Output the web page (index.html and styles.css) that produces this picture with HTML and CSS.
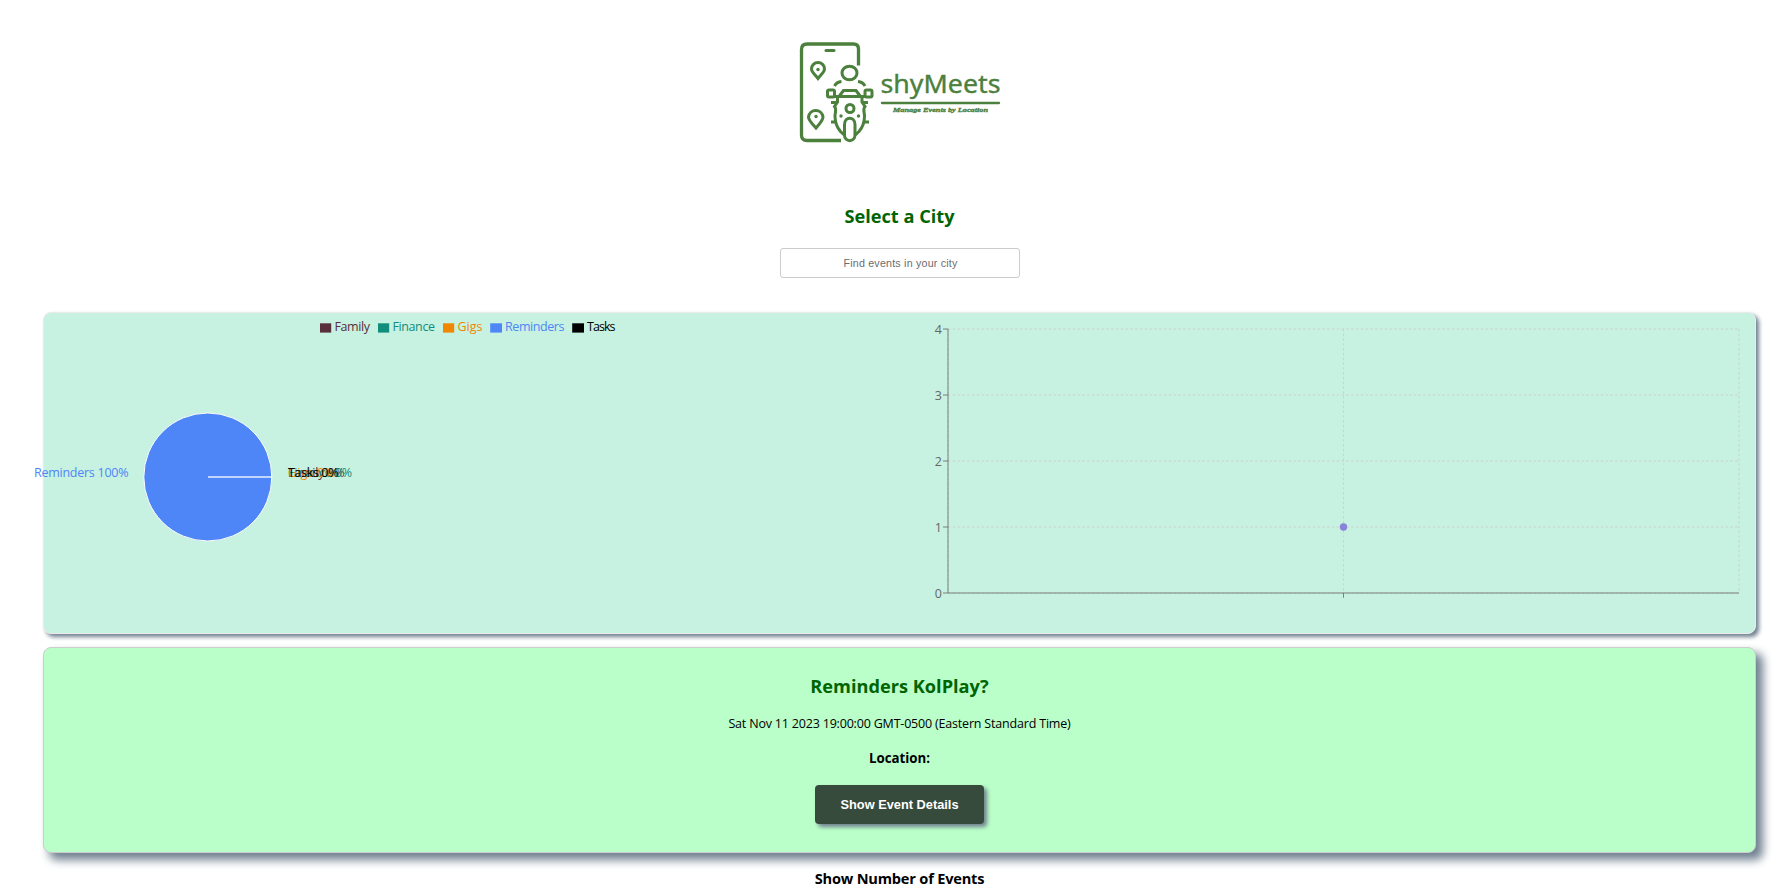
FILE: index.html
```html
<!DOCTYPE html>
<html lang="en">
<head>
<meta charset="utf-8">
<title>shyMeets</title>
<link rel="stylesheet" href="styles.css">
</head>
<body>
<main class="app">
  <svg class="logo" viewBox="780 30 240 125" width="240" height="125" fill="none" stroke="#4b803d" stroke-width="3" role="img" aria-label="shyMeets">
    <path d="M858.500 65.500V49q0-5-5-5h-46.500q-5.500 0-5.500 5.500v85.500q0 5.500 5.500 5.500h34" stroke-width="3.300"/>
    <path d="M826 50.500h8" stroke-linecap="round"/>
    <path d="M818 78.500c-4-5-6.500-6.500-6.500-9.500a6.500 6.500 0 0 1 13 0c0 3-2.500 4.500-6.500 9.500z"/>
    <path d="M816 128c-4.500-5.500-7.500-7.500-7.500-11a7.300 7.300 0 0 1 14.500 0c0 3.500-2.500 5.500-7 11z"/>
    <g fill="#4b803d" stroke="none"><circle cx="818" cy="69.500" r="1.700"/><circle cx="816" cy="116.500" r="1.700"/><circle cx="841" cy="116" r="1.700"/><circle cx="858.500" cy="116" r="1.700"/></g>
    <ellipse cx="849.500" cy="73" rx="7.500" ry="6.800"/>
    <path d="M834.500 86q2-4 7-4.500M858 81.500q5 .5 7 4.500"/>
    <rect x="827.500" y="90" width="7" height="7" rx="1.500"/>
    <rect x="865" y="90" width="7" height="7" rx="1.500"/>
    <path d="M834.500 96.500h30.500M839 96.500l4.500-6h12.500l4.500 6"/>
    <path d="M837.500 97v5l-3 4.500c2.500 2.500.5 6 .5 9.500 0 7 2.500 12 5.500 15.500 1.500 1.500 2.500 2.500 4.500 4M862 97v5l3 4.500c-2.500 2.500-.5 6-.5 9.500 0 7-2.500 12-5.500 15.500-1.500 1.500-2.500 2.500-4.500 4"/>
    <path d="M831 102.500h6M863 102.500h5M831 122h5M864 122h5"/>
    <circle cx="850" cy="108.500" r="4"/>
    <path d="M844.500 124.500c0-8.500 10.500-8.500 10.500 0v10.500c0 7.500-10.500 7.500-10.500 0z"/>
    <path d="M882 103h117" stroke-width="2.300" stroke-linecap="round"/>
    <g fill="#4b803d">
      <text class="logo-name" x="880.500" y="92.700" textLength="120" lengthAdjust="spacingAndGlyphs">shyMeets</text>
      <text class="logo-tag" x="893" y="111.500" textLength="95" lengthAdjust="spacingAndGlyphs">Manage Events by Location</text>
    </g>
  </svg>

  <h2 class="title">Select a City</h2>
  <input class="city" type="text" placeholder="Find events in your city">

  <section class="charts">
    <svg class="pie" viewBox="44 313 856 320" width="856" height="320">
      <rect x="320" y="323.300" width="11.200" height="9.300" fill="#5a2f3c"/>
      <rect x="378" y="323.300" width="11.200" height="9.300" fill="#118d7c"/>
      <rect x="443" y="323.300" width="11.200" height="9.300" fill="#f18700"/>
      <rect x="490.200" y="323.300" width="11.800" height="9.300" fill="#4e86f7"/>
      <rect x="572.200" y="323.300" width="11.800" height="9.300" fill="#000"/>
      <text x="334.500" y="331" fill="#5a2f3c" textLength="35.500">Family</text>
      <text x="392.500" y="331" fill="#118d7c" textLength="42.500">Finance</text>
      <text x="457.500" y="331" fill="#f18700" textLength="25">Gigs</text>
      <text x="505" y="331" fill="#4e86f7" textLength="59.500">Reminders</text>
      <text x="587" y="331" fill="#000" textLength="28.500">Tasks</text>
      <circle cx="207.800" cy="477" r="64" fill="#4e86f7" stroke="#fff" stroke-width="1"/>
      <path d="M208 477h64" stroke="#fff" stroke-width="2" opacity=".65"/>
      <text x="34" y="477" fill="#4e86f7" textLength="94.500">Reminders 100%</text>
      <text x="288" y="477" fill="#5a2f3c" textLength="56.500">Family 0%</text>
      <text x="288" y="477" fill="#118d7c" textLength="64">Finance 0%</text>
      <text x="288" y="477" fill="#f18700" textLength="46.500">Gigs 0%</text>
      <text x="288" y="477" fill="#000" textLength="50.500">Tasks 0%</text>
    </svg>
    <svg class="scatter" viewBox="900 313 855 320" width="855" height="320">
      <g stroke="#ccc" stroke-width=".8" stroke-dasharray="2.4 2.4">
        <path d="M948 329h791M948 395h791M948 461h791M948 527h791M948 593h791"/>
        <path d="M948 329v264M1343.500 329v264M1739 329v264"/>
      </g>
      <path d="M948 329v264h791M943 593h5M943 527h5M943 461h5M943 395h5M943 329h5M1343.500 593v4.800" fill="none" stroke="#666" stroke-width=".8"/>
      <g fill="#666" text-anchor="end">
        <text x="942" y="333.500">4</text><text x="942" y="399.500">3</text><text x="942" y="465.500">2</text><text x="942" y="531.500">1</text><text x="942" y="597.500">0</text>
      </g>
      <circle cx="1343.500" cy="527" r="3.700" fill="#8884d8"/>
    </svg>
  </section>

  <section class="event">
    <h2 class="event-name">Reminders KolPlay?</h2>
    <p class="date">Sat Nov 11 2023 19:00:00 GMT-0500 (Eastern Standard Time)</p>
    <p class="location">Location:</p>
    <button class="details" type="button">Show Event Details</button>
  </section>

  <h3 class="count">Show Number of Events</h3>
</main>
</body>
</html>
```
FILE: styles.css
```css
* { box-sizing: border-box; }

html, body { height: 100%; }

body {
  margin: 0;
  overflow: hidden;
  background: #fff;
  color: #000;
  font-family: "Segoe UI", "Open Sans", "Noto Sans", sans-serif;
}

.app {
  display: flex;
  flex-direction: column;
  align-items: center;
  padding: 30px 27px 0 43px;
}

.logo { display: block; flex: none; }
.logo-name { font: 400 25.5px "Noto Sans", sans-serif; stroke-width: .35px; }
.logo-tag { font: italic 700 6.8px "Liberation Serif", serif; stroke-width: .35px; }

.title {
  margin: 48px 0 0;
  color: #006400;
  font-size: 18.200px;
  font-weight: 700;
  line-height: 26px;
}

.city {
  width: 240px;
  height: 30px;
  margin: 19px 0 34px;
  padding: 0 0 0 2px;
  border: 1px solid #ccc;
  border-radius: 3px;
  font: 10.7px "Liberation Sans", Arial, sans-serif;
  letter-spacing: .2px;
  text-align: center;
}
.city::placeholder { color: #6c6c6c; }

.charts {
  display: flex;
  width: 1713px;
  height: 322px;
  border: 1px solid #ebebeb;
  border-radius: 8px;
  background: #c7f1e1;
  box-shadow: 3px 3px 4px #708090;
}

.pie, .scatter {
  display: block;
  flex: none;
  overflow: visible;
  font-size: 12.5px;
}

.event {
  display: flex;
  flex-direction: column;
  align-items: center;
  width: 1713px;
  height: 206px;
  margin-top: 13px;
  padding-top: 25px;
  border: 1px solid #ccc;
  border-radius: 8px;
  background: #baffc9;
  box-shadow: 6.4px 6.4px 10px #708090;
}

.event-name {
  margin: 0;
  color: #006400;
  font-size: 18.200px;
  line-height: 26px;
}

.date {
  margin: 14.5px 0 0;
  font-size: 12.5px;
  letter-spacing: -.19px;
  line-height: 20px;
}

.location {
  margin: 14.5px 0 0;
  font-size: 13.3px;
  font-weight: 700;
  line-height: 20px;
}

.details {
  width: 169px;
  height: 39px;
  margin-top: 17px;
  padding: 0;
  border: 0;
  border-radius: 4px;
  background: #374b3c;
  box-shadow: 3px 3px 4px #708090;
  color: #fff;
  font: 700 12.8px "Liberation Sans", Arial, sans-serif;
}

.count {
  margin: 15px 0 0;
  font-size: 14.6px;
  letter-spacing: -.2px;
  line-height: 20px;
}
```
